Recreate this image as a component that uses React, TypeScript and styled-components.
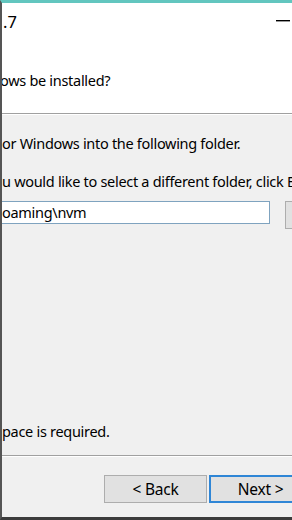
import React from 'react';
import styled, { createGlobalStyle } from 'styled-components';

const GlobalStyle = createGlobalStyle`
  html, body {
    margin: 0;
    padding: 0;
    background: #f0f0f0;
  }
  body {
    font-family: "Noto Sans", "Open Sans", sans-serif;
    color: #000;
  }
`;

// visible slice of the installer window, left side cut by the screen edge
const Frame = styled.div`
  width: 292px;
  height: 520px;
  box-sizing: border-box;
  border-top: 3px solid #62c6bf;
  border-left: 2px solid #555;
  border-bottom: 3px solid #3c3c3c;
  overflow: hidden;
  display: flex;
  flex-direction: column;
  background: #f0f0f0;
  font-size: 14.5px;
  letter-spacing: -0.3px;
`;

const TitleBar = styled.div`
  height: 38px;
  flex-shrink: 0;
  display: flex;
  align-items: center;
  justify-content: space-between;
  background: #fff;
  font-size: 16.5px;
  letter-spacing: 0;
`;

const Title = styled.span`
  padding-left: 1px;
  padding-bottom: 2px;
  white-space: nowrap;
`;

const MinimizeButton = styled.div`
  width: 30px;
  height: 100%;
  display: flex;
  align-items: center;
  justify-content: flex-end;
  padding: 0 2px 2px 0;
  box-sizing: border-box;
`;

const Header = styled.div`
  height: 72px;
  flex-shrink: 0;
  background: #fff;
  padding-top: 28px;
  box-sizing: border-box;
  white-space: nowrap;
`;

const Rule = styled.div`
  height: 1px;
  flex-shrink: 0;
  background: #a0a0a0;
  border-bottom: 1px solid #fff;
`;

const Body = styled.div`
  flex: 1;
  padding-top: 17px;
  white-space: nowrap;
  overflow: hidden;
`;

const Line = styled.div<{ $gap?: number; $clip?: number }>`
  margin-top: ${(p) => p.$gap ?? 0}px;
  margin-left: ${(p) => -(p.$clip ?? 0)}px;
  line-height: 22px;
  white-space: nowrap;
`;

const PathRow = styled.div`
  display: flex;
  align-items: flex-start;
  margin-top: 9px;
  gap: 15px;
`;

const PathInput = styled.div`
  width: 268px;
  height: 23px;
  flex-shrink: 0;
  box-sizing: border-box;
  border: 1px solid #7fa3bf;
  border-left: none;
  background: #fff;
  line-height: 21px;
`;

const Button = styled.div<{ $primary?: boolean }>`
  width: 103px;
  height: 28px;
  flex-shrink: 0;
  box-sizing: border-box;
  background: #e1e1e1;
  border: ${(p) => (p.$primary ? '2px solid #2f86d6' : '1px solid #adadad')};
  display: flex;
  align-items: center;
  justify-content: center;
  font-size: 15.5px;
  letter-spacing: -0.2px;
  white-space: nowrap;
`;

const Footer = styled.div`
  height: 60px;
  flex-shrink: 0;
`;

const ButtonRow = styled.div`
  display: flex;
  gap: 2px;
  padding: 18px 0 0 102px;
`;

const App = () => (
  <>
    <GlobalStyle />
    <Frame>
      <TitleBar>
        <Title>.7</Title>
        <MinimizeButton>
          <svg width="14" height="2" viewBox="0 0 14 2">
            <rect width="14" height="1.4" fill="#000" />
          </svg>
        </MinimizeButton>
      </TitleBar>
      <Header>
        <Line $clip={2}>ows be installed?</Line>
      </Header>
      <Rule />
      <Body>
        <Line>or Windows into the following folder.</Line>
        <Line $gap={16}>u would like to select a different folder, click B</Line>
        <PathRow>
          <PathInput>oaming\nvm</PathInput>
          <Button />
        </PathRow>
        <Line $gap={191}>pace is required.</Line>
      </Body>
      <Rule />
      <Footer>
        <ButtonRow>
          <Button>&lt; Back</Button>
          <Button $primary>Next &gt;</Button>
        </ButtonRow>
      </Footer>
    </Frame>
  </>
);

export default App;
